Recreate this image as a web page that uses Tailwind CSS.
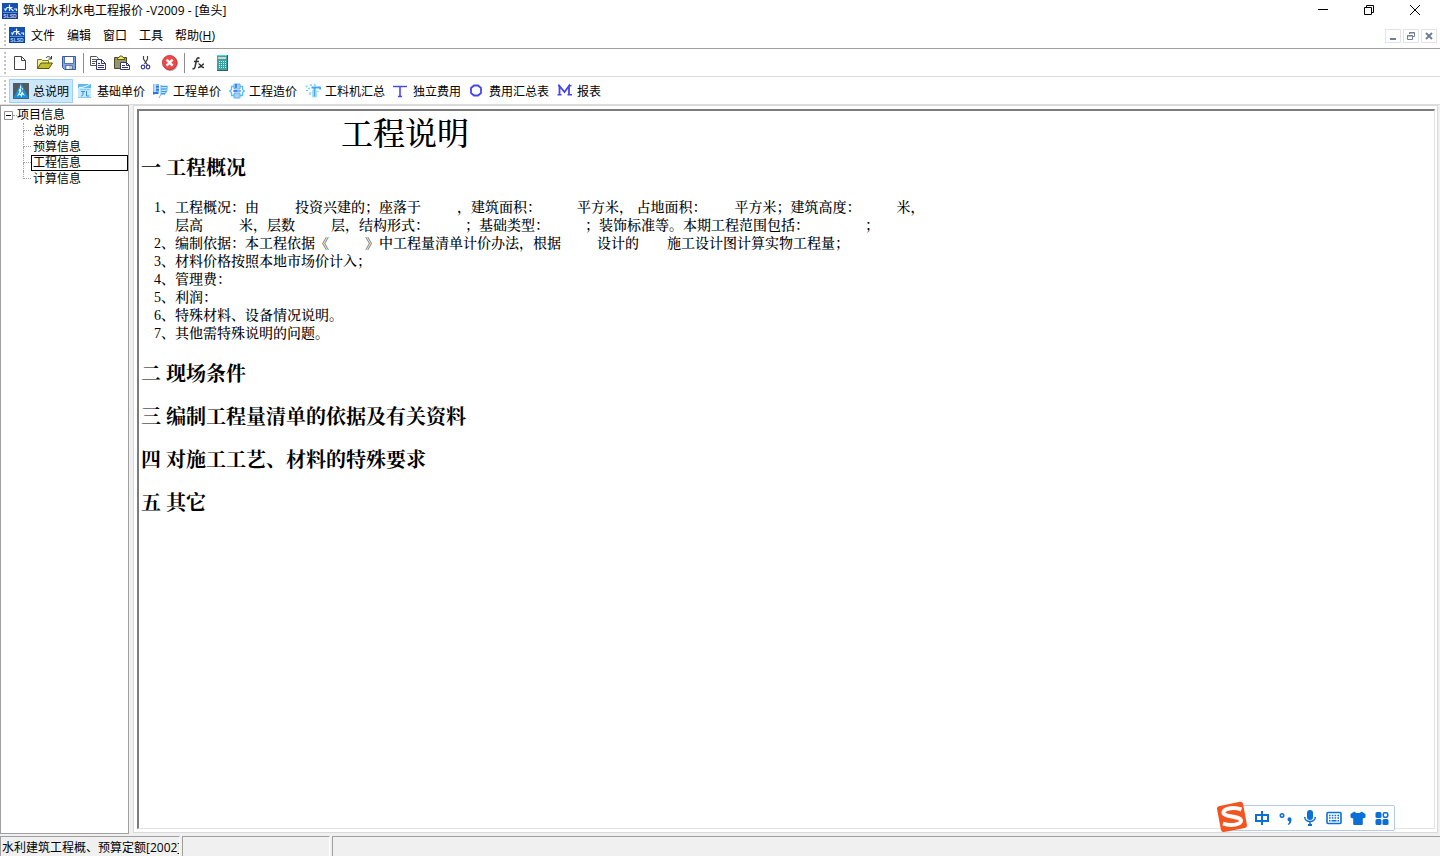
<!DOCTYPE html>
<html lang="zh-CN">
<head>
    <meta charset="UTF-8">
    <meta name="viewport" content="width=device-width, initial-scale=1.0">
    <title>筑业水利水电工程报价 -V2009 - [鱼头]</title>
    <script src="https://cdn.jsdelivr.net/npm/@tailwindcss/browser@4"></script>
</head>
<body class="h-screen flex flex-col overflow-hidden bg-white text-black text-[12px] leading-4 font-['Open_Sans','Noto_Sans_CJK_SC',sans-serif]">

    <!-- Shared application logo -->
    <svg class="hidden">
        <symbol id="logo" viewBox="0 0 16 16">
            <rect width="16" height="16" fill="#1551b5"/>
            <rect y="10" width="16" height="6" fill="#0f3f96"/>
            <path d="M2 6h2.500M5 5l-2 3M7.500 1.500v6.500M4.500 4.500h6M8 5l3.500 3M12 6h2.500v2" stroke="#e6f2ff" stroke-width="1.200" fill="none"/>
            <path d="M1 9.500h14" stroke="#6fa4ea" stroke-width=".7"/>
            <text x="8" y="14.800" font-size="5" font-weight="700" text-anchor="middle" fill="#b9d3fa" font-family="Liberation Sans, sans-serif">SLSD</text>
        </symbol>
    </svg>

    <!-- Title bar -->
    <header class="h-[22px] flex items-center shrink-0">
        <svg class="w-4 h-4 ml-0.5 mr-[5px]"><use href="#logo"/></svg>
        <h1 class="whitespace-pre">筑业水利水电工程报价 -V2009 - [鱼头]</h1>
        <div class="ml-auto mr-0.5 flex h-5">
            <button aria-label="最小化" class="w-[46px] grid place-items-center">
                <svg class="w-3 h-3" viewBox="0 0 12 12"><path d="M1 4.500h10" stroke="#000"/></svg>
            </button>
            <button aria-label="还原" class="w-[46px] grid place-items-center">
                <svg class="w-3 h-3" viewBox="0 0 12 12" fill="none" stroke="#000"><path d="M1.500 2.500h7v7h-7zM3.500 2.500v-2h7v7h-2"/></svg>
            </button>
            <button aria-label="关闭" class="w-[46px] grid place-items-center">
                <svg class="w-3 h-3" viewBox="0 0 12 12" stroke="#000"><path d="M1 0l10 10M11 0L1 10"/></svg>
            </button>
        </div>
    </header>

    <!-- Menu bar -->
    <nav class="h-[27px] flex items-center shrink-0 border-b border-[#a0a0a0]">
        <span class="w-0.5 h-[22px] ml-1 mr-[3px] bg-[linear-gradient(#c4c4c4_50%,transparent_50%)] bg-[length:2px_4px]"></span>
        <svg class="w-4 h-4"><use href="#logo"/></svg>
        <button class="px-1.5 pt-0.5">文件</button>
        <button class="px-1.5 pt-0.5">编辑</button>
        <button class="px-1.5 pt-0.5">窗口</button>
        <button class="px-1.5 pt-0.5">工具</button>
        <button class="px-1.5 pt-0.5">帮助(<u>H</u>)</button>
        <div class="ml-auto mr-[3px] mt-0.5 flex gap-0.5">
            <button aria-label="最小化文档" class="w-4 h-3.5 border border-[#e3e3e3] grid place-items-center">
                <svg class="w-2.5 h-2.5" viewBox="0 0 10 10"><path d="M2 8h6" stroke="#708090" stroke-width="2"/></svg>
            </button>
            <button aria-label="还原文档" class="w-4 h-3.5 border border-[#e3e3e3] grid place-items-center">
                <svg class="w-2.5 h-2.5" viewBox="0 0 10 10" fill="none" stroke="#708090"><path d="M1.500 4.500h5v4h-5zM1 5h6M3.500 3V1.500h5v4H7M3 2h6"/></svg>
            </button>
            <button aria-label="关闭文档" class="w-4 h-3.5 border border-[#e3e3e3] grid place-items-center">
                <svg class="w-2.5 h-2.5" viewBox="0 0 10 10" stroke="#708090" stroke-width="2"><path d="M2 2l6 6M8 2L2 8"/></svg>
            </button>
        </div>
    </nav>

    <!-- Standard toolbar -->
    <div class="h-7 flex items-center shrink-0 border-b border-[#dcdcdc]">
        <span class="w-0.5 h-[22px] ml-1 mr-[3px] bg-[linear-gradient(#c4c4c4_50%,transparent_50%)] bg-[length:2px_4px]"></span>
        <button aria-label="新建" class="w-6 grid place-items-center">
            <svg class="w-4 h-4" viewBox="0 0 16 16"><path d="M1.500 1.500h7l4 4v9h-11z" fill="#fff" stroke="#444"/><path d="M8.500 1.500v4h4" fill="none" stroke="#444"/></svg>
        </button>
        <button aria-label="打开" class="w-6 grid place-items-center">
            <svg class="w-4 h-4" viewBox="0 0 16 16"><path d="M.5 13.500v-9h4l1 1h6v3" fill="#f3ee9a" stroke="#7a7a1a"/><path d="M.5 13.500l3.500-5.500h11.500l-3.500 5.500z" fill="#c2bd2c" stroke="#55550f"/><path d="M9 3c1-2 4-2 5.500 1M14.500 1v3h-3" fill="none" stroke="#333"/></svg>
        </button>
        <button aria-label="保存" class="w-6 grid place-items-center">
            <svg class="w-4 h-4" viewBox="0 0 16 16"><path d="M1.500 1.500h13v13h-11l-2-2z" fill="#7fa6e6" stroke="#3a5a9c"/><path d="M4 2h8v6H4z" fill="#fff"/><path d="M3.500 2v6.500h9V2" fill="none" stroke="#4f74b8"/><path d="M4.500 14v-3.500h7V14" fill="#c5cbd3" stroke="#667799"/><path d="M6 11h2v3H6z" fill="#fff"/></svg>
        </button>
        <span class="w-px h-5 mx-0.5 bg-[#8c8c8c]"></span>
        <button aria-label="复制" class="w-6 grid place-items-center">
            <svg class="w-4 h-4" viewBox="0 0 16 16" stroke="#555"><path d="M.5 1.500h6l2 2v7h-8z" fill="#fff"/><path d="M2 4.500h4M2 6.500h4M2 8.500h3"/><path d="M6.500 4.500h5l4 4v6h-9z" fill="#fff" stroke="#35357a"/><path d="M11.500 4.500v4h4M8 8.500h2M8 10.500h6M8 12.500h6" fill="none" stroke="#35357a"/></svg>
        </button>
        <button aria-label="粘贴" class="w-6 grid place-items-center">
            <svg class="w-4 h-4" viewBox="0 0 16 16"><path d="M.5 2.500h12v11H.5z" fill="#96946a" stroke="#4c4a26"/><path d="M3.500 4.500v-2h1.500l1-1.500h2l1 1.500h1.500v2z" fill="#f6ef55" stroke="#5c5a26"/><path d="M6.500 7.500h6l3 3v4h-9z" fill="#fff" stroke="#35357a"/><path d="M8 10.500h3M8 12.500h6M12.500 7.500v3h3" fill="none" stroke="#35357a"/></svg>
        </button>
        <button aria-label="剪切" class="w-6 grid place-items-center">
            <svg class="w-4 h-4" viewBox="0 0 16 16" fill="none"><path d="M5.500 1v3l4 6M9.500 1v3l-3 5" stroke="#444" stroke-width="1.200"/><circle cx="5" cy="12" r="1.800" stroke="#3c3ca0" stroke-width="1.200"/><circle cx="10" cy="12" r="1.800" stroke="#3c3ca0" stroke-width="1.200"/></svg>
        </button>
        <button aria-label="删除" class="w-6 grid place-items-center">
            <svg class="w-4 h-4" viewBox="0 0 16 16"><circle cx="8.500" cy="8.500" r="7.500" fill="#a9a9a9"/><circle cx="7.600" cy="7.600" r="7.200" fill="#f04848" stroke="#c03030" stroke-width=".8"/><path d="M4.600 4.600l6 6M10.600 4.600l-6 6" stroke="#fff" stroke-width="2.400"/></svg>
        </button>
        <span class="w-px h-5 ml-0.5 mr-px bg-[#8c8c8c]"></span>
        <button aria-label="函数" class="w-6 grid place-items-center">
            <svg class="w-4 h-4" viewBox="0 0 16 16" fill="none" stroke="#333"><path d="M9.500 3.500c-1.500-1.500-2.500-.5-3 1.500l-1.500 7c-.4 1.600-1.400 2-2.500 1.500M4 6.500h5" stroke-width="1.500"/><path d="M8.500 9c2-.5 2.500 4 5.500 3.500M14 9c-2 0-3 4-6 3.500" stroke-width="1.500"/></svg>
        </button>
        <button aria-label="计算器" class="w-6 grid place-items-center">
            <svg class="w-4 h-4" viewBox="0 0 16 16"><path d="M3 0h11v16H3z" fill="#2f5f6a"/><path d="M3 0h10v15H3z" fill="#3fa3a3"/><path d="M3 0h10v1H3z" fill="#46dbe0"/><path d="M4 2h8v2H4z" fill="#d9d3c8"/><path d="M5 6.500h7M5 8.500h7M5 10.500h7M5 12.500h7" stroke="#c9f0f0" stroke-dasharray="1 1"/></svg>
        </button>
    </div>

    <!-- Section toolbar -->
    <div class="h-7 flex items-center shrink-0 border-b border-[#dcdcdc]">
        <span class="w-0.5 h-[22px] ml-1 mr-[3px] bg-[linear-gradient(#c4c4c4_50%,transparent_50%)] bg-[length:2px_4px]"></span>
        <button class="h-6 px-[3px] flex items-center gap-1 bg-[#cce8ff] border border-[#99d1ff]">
            <svg class="w-4 h-4" viewBox="0 0 16 16"><path d="M0 0h16v16H0z" fill="#555a60"/><path d="M8 0l7.500 15H.5z" fill="#1593dd"/><path d="M7.500 1l1 4h1.500l-1 3 3 5-2.500-1.500-1 3-1.500-3-3 2 2.500-5-1-1 1.500-2.500z" fill="#e8f7ff"/><path d="M8 5l1 3-2 3" stroke="#1180cc" fill="none"/></svg>
            <span class="pt-0.5">总说明</span>
        </button>
        <button class="h-6 px-1 flex items-center gap-1">
            <svg class="w-4 h-4" viewBox="0 0 16 16"><path d="M1 1h13v14H1z" fill="#c3e7fb"/><path d="M1 1h13v4H1z" fill="#5fb8f0"/><path d="M2 4.500c4 0 8-1 11-3.500" stroke="#fff" fill="none"/><path d="M3 6.500h10" stroke="#8ccbf5"/><path d="M4 8.500h4M6 8v3c0 1.500-1 2-2 2M9.500 8v5h2.500" stroke="#3d8fe0" fill="none"/><path d="M1 14.500h13" stroke="#89cdf5"/></svg>
            <span class="pt-0.5">基础单价</span>
        </button>
        <button class="h-6 px-1 flex items-center gap-1">
            <svg class="w-4 h-4" viewBox="0 0 16 16"><path d="M0 1h1.500v11H0zM2.500 1H6v10H2.500z" fill="#7cb9f5"/><path d="M3 3h3v1.500H3zM3 6h3v1.500H3zM0 9h5v2H0z" fill="#2f74e0"/><path d="M8 3.500h6.500M8 6h6M8 8.500h6M8 11l4-.5" stroke="#3f9bee" stroke-width="1.600"/><path d="M8 2v9l-2 4M14 3v5l-3 4" stroke="#62b4f5" fill="none"/></svg>
            <span class="pt-0.5">工程单价</span>
        </button>
        <button class="h-6 px-1 flex items-center gap-1">
            <svg class="w-4 h-4" viewBox="0 0 16 16"><path d="M5 1h6v5H5zM5 10h6v5H5z" fill="#a9d1f8" stroke="#5fb0f5"/><path d="M5 3.500H2.500v3L.8 8l1.700 1.500v3H5M11 3.500h2.500v3L15.200 8l-1.700 1.500v3H11" fill="none" stroke="#52bdf6" stroke-width="1.300"/><path d="M4 7h8v2H4z" fill="#8aa8f4"/><path d="M6 1h2v4H6zM5 7h3v2H5z" fill="#4388f0"/></svg>
            <span class="pt-0.5">工程造价</span>
        </button>
        <button class="h-6 px-1 flex items-center gap-1">
            <svg class="w-4 h-4" viewBox="0 0 16 16" fill="none"><path d="M.5 3.500h2M3 5.500h2M5 2h2M9 1l1.500 2" stroke="#72d5fa" stroke-width="1.300"/><path d="M6.500 4.500H15l.5 2" stroke="#43a5f3" stroke-width="1.800"/><path d="M9.500 4v10" stroke="#43a5f3" stroke-width="2"/><path d="M7.500 7v7h4V7" stroke="#a7defb"/><path d="M1 7.500h2M5 9v3M13 8v1" stroke="#55b9f5"/></svg>
            <span class="pt-0.5">工料机汇总</span>
        </button>
        <button class="h-6 px-1 flex items-center gap-1">
            <svg class="w-4 h-4" viewBox="0 0 16 16" stroke="#4646f0" fill="none"><path d="M0 3.500h14" stroke-width="1.400"/><path d="M7 3v10M5 13.500h4" stroke-width="1.600"/></svg>
            <span class="pt-0.5">独立费用</span>
        </button>
        <button class="h-6 px-1 flex items-center gap-1">
            <svg class="w-4 h-4" viewBox="0 0 16 16"><path d="M5 2.500h4L12 5v5l-3 2.500H5L2 10V5z" stroke="#4646f0" stroke-width="1.800" fill="none"/></svg>
            <span class="pt-0.5">费用汇总表</span>
        </button>
        <button class="h-6 px-1 flex items-center gap-1">
            <svg class="w-4 h-4" viewBox="0 0 16 16" stroke="#4646f0" fill="none"><path d="M2.500 12V3l5 6L12 3v9" stroke-width="1.800"/><path d="M1 2.800h2M11.500 2.800h3M.5 11.800h4M10.500 11.800H15" stroke-width="1.400"/></svg>
            <span class="pt-0.5">报表</span>
        </button>
    </div>

    <!-- Workspace -->
    <main class="flex-1 min-h-0 flex gap-1 bg-[#f0f0f0] pb-px pr-0.5">
        <!-- Project tree -->
        <aside class="w-[129px] shrink-0 bg-white border border-[#a0a0a0] pt-px">
            <div class="flex items-center h-4">
                <svg class="w-[9px] h-[9px] ml-[3px]" viewBox="0 0 9 9" fill="none"><path d="M.5.500h8v8h-8z" stroke="#919191"/><path d="M2 4.500h5" stroke="#000"/></svg>
                <span class="w-1 border-t border-dotted border-[#a0a0a0]"></span>
                项目信息
            </div>
            <ul>
                <li class="flex h-4">
                    <span class="ml-[22px] w-2 flex flex-col"><i class="h-2 border-l border-b border-dotted border-[#a0a0a0]"></i><i class="h-2 border-l border-dotted border-[#a0a0a0]"></i></span>
                    <a href="#" class="pl-0.5">总说明</a>
                </li>
                <li class="flex h-4">
                    <span class="ml-[22px] w-2 flex flex-col"><i class="h-2 border-l border-b border-dotted border-[#a0a0a0]"></i><i class="h-2 border-l border-dotted border-[#a0a0a0]"></i></span>
                    <a href="#" class="pl-0.5">预算信息</a>
                </li>
                <li class="flex h-4">
                    <span class="ml-[22px] w-2 flex flex-col"><i class="h-2 border-l border-b border-dotted border-[#a0a0a0]"></i><i class="h-2 border-l border-dotted border-[#a0a0a0]"></i></span>
                    <a href="#" class="flex-1 pl-px flex items-center border border-black">工程信息</a>
                </li>
                <li class="flex h-4">
                    <span class="ml-[22px] w-2"><i class="block h-2 border-l border-b border-dotted border-[#a0a0a0]"></i></span>
                    <a href="#" class="pl-0.5">计算信息</a>
                </li>
            </ul>
        </aside>

        <!-- Document -->
        <div class="flex-1 min-w-0 bg-white border border-[#d9d9d9] p-[3px] pr-0.5 mb-px">
            <article class="h-full overflow-hidden border-t-2 border-l-2 border-r border-b border-t-[#7c7c7c] border-l-[#7c7c7c] border-r-[#e3e3e3] border-b-[#e3e3e3] pl-0.5 font-['Liberation_Serif','Noto_Serif_CJK_SC','Noto_Sans_CJK_SC',serif]">
                <h2 class="pl-[200px] pt-px text-[32px] leading-[44px] font-medium">工程说明</h2>
                <h3 class="text-[20px] leading-6 font-bold">一 工程概况</h3>
                <div class="my-[19px] pl-[13px] text-[14px] leading-[18px] font-medium whitespace-nowrap">
                    <p>1、工程概况：由<span class="inline-block w-9"></span>投资兴建的；座落于<span class="inline-block w-9"></span>，建筑面积：<span class="inline-block w-9"></span>平方米， 占地面积：<span class="inline-block w-7"></span>平方米；建筑高度：<span class="inline-block w-9"></span>米，</p>
                    <p class="pl-[21px]">层高<span class="inline-block w-9"></span>米，层数<span class="inline-block w-9"></span>层，结构形式：<span class="inline-block w-9"></span>；基础类型：<span class="inline-block w-9"></span>；装饰标准等。本期工程范围包括：<span class="inline-block w-14"></span>；</p>
                    <p>2、编制依据：本工程依据《<span class="inline-block w-9"></span>》中工程量清单计价办法，根据<span class="inline-block w-9"></span>设计的<span class="inline-block w-7"></span>施工设计图计算实物工程量；</p>
                    <p>3、材料价格按照本地市场价计入；</p>
                    <p>4、管理费：</p>
                    <p>5、利润：</p>
                    <p>6、特殊材料、设备情况说明。</p>
                    <p>7、其他需特殊说明的问题。</p>
                </div>
                <div class="text-[20px] leading-6 font-bold flex flex-col gap-[19px]">
                    <h3>二 现场条件</h3>
                    <h3>三 编制工程量清单的依据及有关资料</h3>
                    <h3>四 对施工工艺、材料的特殊要求</h3>
                    <h3>五 其它</h3>
                </div>
            </article>
        </div>
    </main>

    <!-- Status bar -->
    <footer class="h-[21px] shrink-0 flex gap-0.5 bg-[#f0f0f0] pt-px">
        <div class="w-[180px] pl-px pt-[3px] overflow-hidden whitespace-nowrap border-t border-l border-r border-[#a0a0a0] border-r-white">水利建筑工程概、预算定额[2002]</div>
        <div class="w-[148px] border-t border-l border-r border-[#a0a0a0] border-r-white"></div>
        <div class="flex-1 border-t border-l border-[#a0a0a0]"></div>
    </footer>

    <!-- Input method bar -->
    <div class="fixed right-[45px] bottom-[25px] h-[26px] flex items-center bg-white border border-[#b4cce6] rounded-xs text-[#0b6fd6]">
        <svg class="w-8 h-8 -ml-3.5 mb-0.5 mr-0.5" viewBox="0 0 32 32"><path d="M3.500 5L24 .8q2.500-.3 3 2L31 24q.3 2.500-2 3L8 31q-2.500.3-3-2L1 8q-.2-2.500 2.500-3z" fill="#f4541f"/><path d="M25.500 8.500C17 5.500 7 7.500 7.500 12c.5 4 17 3 17.500 7.500.3 4-10 6-18 3" fill="none" stroke="#fff" stroke-width="4"/></svg>
        <button aria-label="中文" class="w-6 grid place-items-center">
            <svg class="w-4 h-4" viewBox="0 0 16 16" fill="none" stroke="currentColor" stroke-width="2"><path d="M2 5h12v6H2zM8 1v14"/></svg>
        </button>
        <button aria-label="标点" class="w-6 grid place-items-center">
            <svg class="w-4 h-4" viewBox="0 0 16 16" fill="currentColor"><circle cx="4" cy="5.500" r="1.700" fill="none" stroke="currentColor" stroke-width="1.600"/><path d="M9.500 9a2 2 0 1 1 4 .5c0 3-1 4.500-3.300 5.500l-.5-1c1-.6 1.600-1.500 1.600-2.600-1 0-1.800-.9-1.800-2.400z"/></svg>
        </button>
        <button aria-label="语音" class="w-6 grid place-items-center">
            <svg class="w-4 h-4" viewBox="0 0 16 16" fill="currentColor"><rect x="5" y="0" width="6" height="10" rx="3"/><path d="M2.700 7c0 6 10.600 6 10.600 0M8 11.500V14" fill="none" stroke="currentColor" stroke-width="1.500"/><path d="M6 14h4v2H6z"/></svg>
        </button>
        <button aria-label="键盘" class="w-6 grid place-items-center">
            <svg class="w-4 h-4" viewBox="0 0 16 16" fill="none" stroke="currentColor"><rect x="1" y="2.500" width="14" height="11" rx="1" stroke-width="1.600"/><path d="M3 5.500h10.500M3 8h10.500" stroke-width="1.600" stroke-dasharray="1.600 1.200"/><path d="M3 10.800h1.500M5.500 10.800h5M11.500 10.800H13" stroke-width="1.600"/></svg>
        </button>
        <button aria-label="皮肤" class="w-6 grid place-items-center">
            <svg class="w-4 h-4" viewBox="0 0 16 16" fill="currentColor"><path d="M4.500 1.500C6 3.500 10 3.500 11.500 1.500L15.500 4v3.500L12.800 8.500V14q0 1-1 1H4.200q-1 0-1-1V8.500L.5 7.500V4z"/></svg>
        </button>
        <button aria-label="工具箱" class="w-6 grid place-items-center">
            <svg class="w-4 h-4" viewBox="0 0 16 16" fill="currentColor"><rect x="1.500" y="2" width="6" height="6" rx="1.500"/><rect x="1.500" y="9" width="6" height="6" rx="1.500"/><rect x="8.500" y="9" width="6" height="6" rx="1.500"/><rect x="9.300" y="2.800" width="4.400" height="4.400" rx="1.500" fill="none" stroke="currentColor" stroke-width="1.600"/></svg>
        </button>
    </div>
</body>
</html>
